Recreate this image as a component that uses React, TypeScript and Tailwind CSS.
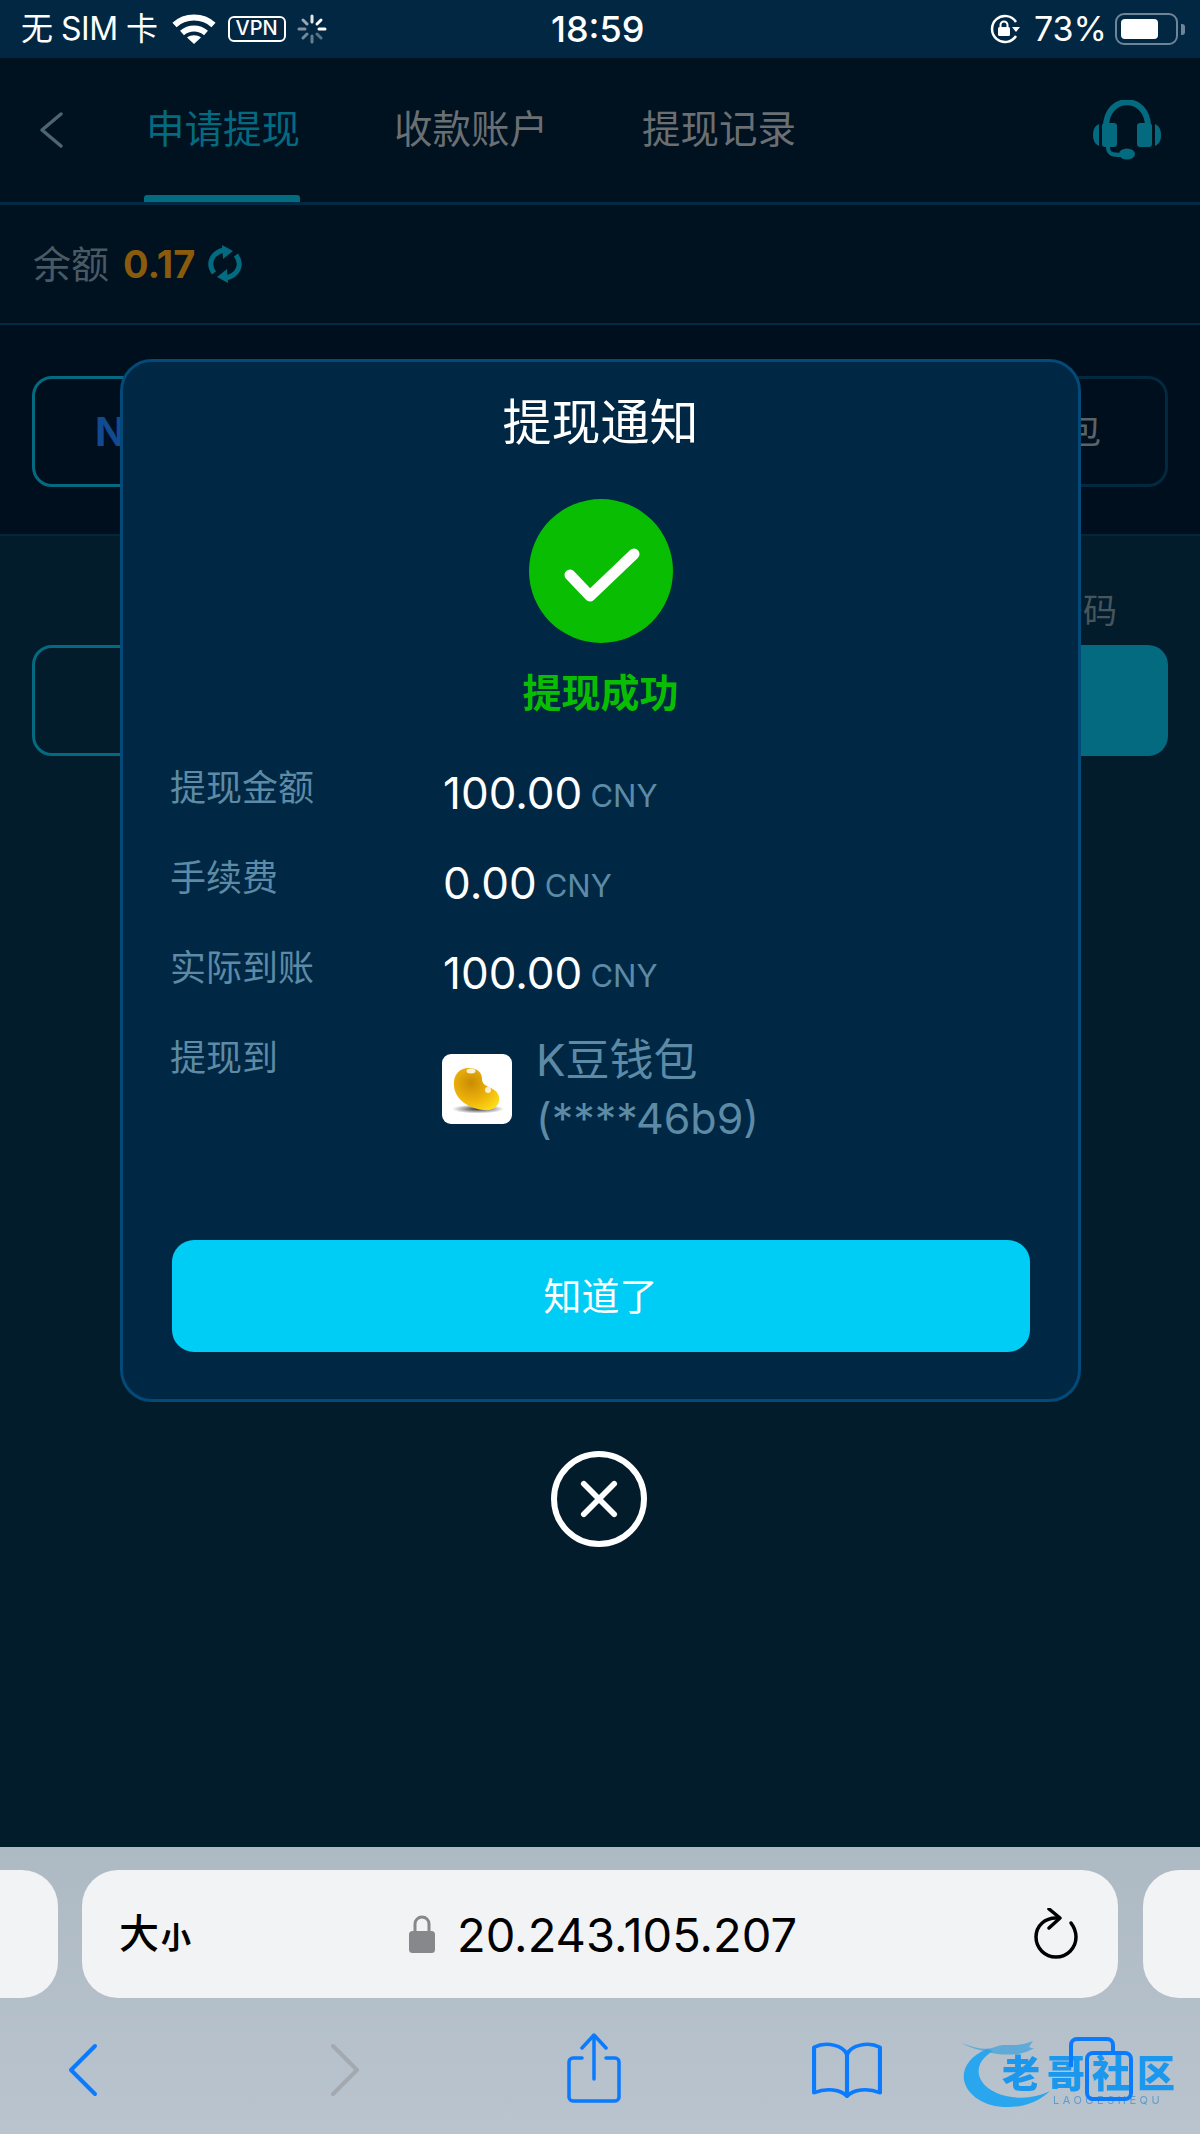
const rows = [
  { label: '提现金额', amount: '100.00' },
  { label: '手续费', amount: '0.00' },
  { label: '实际到账', amount: '100.00' },
]

function StatusBar() {
  return (
    <div className="relative h-[58px] shrink-0 bg-[#012743] flex items-center text-white pl-[21px] pr-[15px]">
      <span className="text-[32px] leading-none tracking-[-0.5px]">无 SIM 卡</span>
      <svg viewBox="0 0 44 32" className="ml-[14px] w-[44px] h-[32px]" fill="none" stroke="#fff" strokeWidth="6">
        <path d="M2.5 12C13 2 31 2 41.500 12" />
        <path d="M10 20c7-6 17-6 24 0" />
        <path d="M22 31l-7-6.500c4-3 10-3 14 0z" fill="#fff" stroke="none" />
      </svg>
      <span className="ml-[12px] w-[58px] h-[26px] border-2 border-white rounded-[6px] text-[20px] leading-[21px] text-center font-medium">VPN</span>
      <svg viewBox="0 0 30 30" className="ml-[11px] w-[30px] h-[30px]" stroke="#fff" strokeWidth="3" strokeLinecap="round">
        <path d="M15 2v6" opacity="0.9" />
        <path d="M24 6l-4 4" />
        <path d="M28 15h-6" />
        <path d="M24 24l-4-4" opacity="0.35" />
        <path d="M15 28v-6" opacity="0.4" />
        <path d="M6 24l4-4" opacity="0.45" />
        <path d="M2 15h6" opacity="0.5" />
        <path d="M6 6l4 4" opacity="0.6" />
      </svg>
      <span className="absolute left-[551px] text-[36px] leading-none font-medium">18:59</span>
      <svg viewBox="0 0 32 30" className="ml-auto w-[32px] h-[30px]" fill="none" stroke="#fff" strokeWidth="2.500">
        <path d="M27 22a13 13 0 1 1 0-14" />
        <path d="M23 13h8l-4 5z" fill="#fff" stroke="none" />
        <rect x="9" y="13" width="12" height="9" rx="1.500" fill="#fff" stroke="none" />
        <path d="M11.500 13v-2a3.500 3.500 0 0 1 7 0v2" strokeWidth="2" />
      </svg>
      <span className="ml-[13px] text-[34px] leading-none">73%</span>
      <div className="ml-[8px] w-[63px] h-[32px] rounded-[9px] border-2 border-[#6f8497] p-[4px]">
        <div className="w-[37px] h-full bg-white rounded-[4px]" />
      </div>
      <div className="ml-[3px] w-[4px] h-[11px] bg-[#6f8497] rounded-r-[3px]" />
    </div>
  )
}

function HeadsetIcon() {
  return (
    <svg viewBox="0 0 68 60" className="w-[68px] h-[60px]" fill="#046a80">
      <path d="M13 27C13 -6 55 -6 55 27" fill="none" stroke="#046a80" strokeWidth="6" />
      <rect x="9" y="23" width="15" height="24" rx="3" />
      <rect x="44" y="23" width="15" height="24" rx="3" />
      <path d="M0 35c0-6 2-9 6-11v22c-4-2-6-5-6-11z" />
      <path d="M68 35c0-6-2-9-6-11v22c4-2 6-5 6-11z" />
      <path d="M15 47c0 7 4 8 14 8" fill="none" stroke="#046a80" strokeWidth="4" />
      <ellipse cx="34" cy="54" rx="8" ry="5.500" />
    </svg>
  )
}

// two curved arrows chasing each other, taller than wide
function RefreshIcon() {
  return (
    <svg viewBox="0 0 36 38" className="w-[36px] h-[38px]" fill="none" stroke="#046a80" strokeWidth="5">
      <path d="M7 28C0 18 5 8 17 5" />
      <path d="M15 0l11 6-10 8z" fill="#046a80" stroke="none" />
      <path d="M29 10c7 10 2 20-10 23" />
      <path d="M21 38l-11-6 10-8z" fill="#046a80" stroke="none" />
    </svg>
  )
}

function BeanLogo() {
  return (
    <div className="mt-[23px] w-[70px] h-[70px] shrink-0 rounded-[9px] bg-white">
      <svg viewBox="0 0 70 70" className="w-full h-full">
        <defs>
          <radialGradient id="bean" cx="0.38" cy="0.35" r="0.8">
            <stop offset="0" stopColor="#c98c05" />
            <stop offset="0.55" stopColor="#eeb40a" />
            <stop offset="1" stopColor="#ffe01a" />
          </radialGradient>
          <radialGradient id="beanShadow">
            <stop offset="0" stopColor="#333" />
            <stop offset="1" stopColor="#fff" />
          </radialGradient>
        </defs>
        <ellipse cx="36" cy="55" rx="26" ry="4.500" fill="url(#beanShadow)" />
        <path d="M12 32C11 21 17 14 27 14c8 0 13 4 13 11 0 5 4 7 9 9 6 3 9 7 8 13-1 6-7 10-15 9C28 55 13 46 12 32z" fill="url(#bean)" />
        <ellipse cx="29" cy="17" rx="4.500" ry="2.500" fill="#fff" opacity="0.85" />
        <circle cx="46" cy="36" r="3" fill="#fff" opacity="0.8" />
      </svg>
    </div>
  )
}

function SuccessModal() {
  return (
    <div className="absolute left-[120px] top-[301px] w-[961px] flex flex-col items-center">
      <div className="w-full h-[1043px] rounded-[32px] border-[3px] border-[#034a78] bg-[#002744] flex flex-col items-center pt-[31px]">
        <h2 className="text-[49px] leading-[60px] text-white">提现通知</h2>
        <div className="mt-[46px] w-[144px] h-[144px] rounded-full bg-[#09bd03] flex items-center justify-center">
          <svg viewBox="0 0 78 56" className="mt-[8px] ml-[3px] w-[78px] h-[56px]" fill="none" stroke="#fff" strokeWidth="11" strokeLinecap="round" strokeLinejoin="round">
            <path d="M7 28l20 21L71 7" />
          </svg>
        </div>
        <div className="mt-[25px] text-[39px] leading-[50px] font-bold text-[#09bd03]">提现成功</div>

        <div className="mt-[43px] w-full px-[47px]">
          {rows.map((row) => (
            <div key={row.label} className="flex h-[90px]">
              <span className="w-[273px] text-[36px] leading-[54px] text-[#5d8aa5]">{row.label}</span>
              <span className="text-[44px] leading-[64px] text-white">
                {row.amount}
                <span className="ml-[8px] text-[31px] align-[2px] text-[#5d8aa5]">CNY</span>
              </span>
            </div>
          ))}
          <div className="flex">
            <span className="w-[272px] text-[36px] leading-[54px] text-[#5d8aa5]">提现到</span>
            <BeanLogo />
            <div className="ml-[24px] text-[44px] leading-[58px] text-[#5d8aa5]">
              <div>K豆钱包</div>
              <div className="text-[43px]">(****46b9)</div>
            </div>
          </div>
        </div>

        <button className="mt-[93px] w-[858px] h-[112px] rounded-[22px] bg-[#00cdf5] text-[38px] text-white">知道了</button>
      </div>

      <button className="mt-[49px] -ml-[3px] w-[96px] h-[96px] rounded-full border-[6px] border-white flex items-center justify-center">
        <svg viewBox="0 0 40 40" className="w-[38px] h-[38px]" stroke="#fff" strokeWidth="6" strokeLinecap="round">
          <path d="M4 4l32 32M36 4L4 36" />
        </svg>
      </button>
    </div>
  )
}

// community logo stamped over the bottom toolbar: dragon swoosh plus wordmark
function Watermark() {
  return (
    <div className="absolute left-[960px] top-[187px] w-[225px] h-[90px] blur-[0.7px] overflow-hidden">
      <svg viewBox="0 0 100 80" className="absolute left-0 top-0 w-[100px] h-[80px]" fill="none">
        <path d="M27 15C10 22 2 34 4 46c3 16 22 28 46 27 14 0 30-6 40-16-12 6-26 8-38 6-16-2-30-10-33-22-2-10 4-18 14-24z" fill="#2aa6ee" />
        <path d="M2 9c12 5 22 7 30 5 10-4 12-3 20-3 8 0 14-1 21-4-2 3-3 4-4 6 2 1 3 1 5 1-4 3-10 5-16 6-10 1-20 1-30-2C20 16 10 14 2 9z" fill="#3a9fdc" opacity="0.7" />
      </svg>
      <span className="absolute left-[42px] top-[24px] text-[38px] leading-[30px] font-extrabold text-[#1b97ee] whitespace-nowrap tracking-[7px]">老哥社区</span>
      <span className="absolute left-[93px] top-[60px] text-[11px] leading-[12px] text-[#5f9ccb] whitespace-nowrap tracking-[3.500px]">LAOGESHEQU</span>
    </div>
  )
}

function BrowserChrome() {
  return (
    <div className="relative h-[287px] shrink-0 bg-gradient-to-b from-[#adb9c3] to-[#b9c4ce]">
      <div className="flex pt-[23px] h-[151px]">
        <div className="w-[58px] h-[128px] rounded-r-[36px] bg-[#f2f3f5]" />
        <div className="relative ml-[24px] w-[1036px] h-[128px] rounded-[36px] bg-[#f2f3f5] flex items-center justify-between pl-[37px] pr-[40px]">
          <span className="text-[40px] leading-none font-medium text-black">
            大<span className="ml-[2px] text-[30px] font-semibold">小</span>
          </span>
          <div className="absolute left-[327px] flex items-center gap-[22px]">
            <svg viewBox="0 0 26 38" className="w-[26px] h-[38px]" fill="none">
              <path d="M6 18V9a7 7 0 0 1 14 0v9" stroke="#87888c" strokeWidth="3" />
              <rect x="0" y="16" width="26" height="22" rx="3.500" fill="#87888c" />
            </svg>
            <span className="text-[47px] leading-none text-black">20.243.105.207</span>
          </div>
          <svg viewBox="0 0 44 52" className="w-[44px] h-[52px]" fill="none" stroke="#000" strokeWidth="3.500" strokeLinecap="round" strokeLinejoin="round">
            <path d="M24 10C11 9 2 18 2 29a20 20 0 0 0 40 0c0-6-2-10-5-14" />
            <path d="M15 1l11 9-11 10" />
          </svg>
        </div>
        <div className="ml-[25px] flex-1 h-[128px] rounded-l-[36px] bg-[#f2f3f5]" />
      </div>

      <Watermark />

      <div className="relative h-[136px] text-[#0a7afe]">
        <svg viewBox="0 0 30 54" className="absolute left-[68px] top-[45px] w-[30px] h-[54px]" fill="none" stroke="currentColor" strokeWidth="4" strokeLinecap="round" strokeLinejoin="round">
          <path d="M27 3L3 27l24 24" />
        </svg>
        <svg viewBox="0 0 30 54" className="absolute left-[330px] top-[45px] w-[30px] h-[54px]" fill="none" stroke="#a3a9af" strokeWidth="4" strokeLinecap="round" strokeLinejoin="round">
          <path d="M3 3l24 24L3 51" />
        </svg>
        <svg viewBox="0 0 54 70" className="absolute left-[567px] top-[35px] w-[54px] h-[70px]" fill="none" stroke="currentColor" strokeWidth="3.500" strokeLinecap="round" strokeLinejoin="round">
          <path d="M15 25H6a4 4 0 0 0-4 4v35a4 4 0 0 0 4 4h42a4 4 0 0 0 4-4V29a4 4 0 0 0-4-4h-9" />
          <path d="M27 46V3" />
          <path d="M15 15L27 2l12 13" />
        </svg>
        <svg viewBox="0 0 68 64" preserveAspectRatio="none" className="absolute left-[812px] top-[44px] w-[70px] h-[56px]" fill="none" stroke="currentColor" strokeWidth="4" strokeLinejoin="round">
          <path d="M34 14C30 4 14 -1 2 6v52c12-6 26-4 32 4 6-8 20-10 32-4V6C54 -1 38 4 34 14z" />
          <path d="M34 14v48" />
        </svg>
        <svg viewBox="0 0 64 64" className="absolute left-[1069px] top-[39px] w-[64px] h-[64px]" fill="none" stroke="currentColor" strokeWidth="4" strokeLinejoin="round">
          <path d="M2 30V8a6 6 0 0 1 6-6h30a6 6 0 0 1 6 6v8" />
          <rect x="18" y="16" width="44" height="46" rx="6" />
        </svg>
      </div>
    </div>
  )
}

export default function App() {
  return (
    <div className="w-[1200px] h-[2134px] flex flex-col overflow-hidden bg-[#031c2c] font-['Inter','Noto_Sans_CJK_SC',sans-serif]">
      <StatusBar />

      <main className="relative flex-1 flex flex-col">
        {/* Nav tabs */}
        <nav className="h-[147px] shrink-0 bg-[#00111f] border-b-[3px] border-[#012a44] relative flex items-center">
          <svg viewBox="0 0 26 38" className="absolute left-[38px] top-[53px] w-[26px] h-[38px]" fill="none" stroke="#4d6472" strokeWidth="3.500" strokeLinecap="round" strokeLinejoin="round">
            <path d="M23 3L4 19l19 16" />
          </svg>
          <div className="ml-[146px] flex gap-[94px] -mt-[3px] text-[38.5px] leading-[50px] text-[#6a6f73]">
            <span className="text-[#046a80]">申请提现</span>
            <span>收款账户</span>
            <span>提现记录</span>
          </div>
          <div className="absolute left-[144px] bottom-0 w-[156px] h-[7px] rounded-t-[3px] bg-[#046a80]" />
          <div className="absolute right-[39px] top-[42px]">
            <HeadsetIcon />
          </div>
        </nav>

        {/* Balance */}
        <div className="h-[120px] shrink-0 bg-[#00111f] border-b-[2px] border-[#012a44] flex items-center pl-[33px] gap-[14px]">
          <span className="text-[38px] leading-none text-[#4a5a64]">余额</span>
          <span className="text-[38px] leading-none font-bold text-[#8a5a0d]">0.17</span>
          <div className="-ml-[2px]">
            <RefreshIcon />
          </div>
        </div>

        {/* Withdrawal methods */}
        <div className="h-[211px] shrink-0 bg-[#000f1d] border-b-[2px] border-[#032638] flex justify-between px-[32px] pt-[51px]">
          <div className="w-[400px] h-[111px] rounded-[20px] border-[3px] border-[#056a80] pl-[60px] text-[40px] leading-[105px] font-bold text-[#114a90]">NOWPAY</div>
          <div className="w-[400px] h-[111px] rounded-[20px] border-[3px] border-[#03283f] pr-[64px] text-right text-[36px] leading-[105px] text-[#5a6368]">K豆钱包</div>
        </div>

        {/* Password entry */}
        <div className="flex justify-between pl-[32px] pr-[83px] pt-[50px]">
          <span />
          <span className="text-[34px] leading-[50px] text-[#47555d]">提现密码</span>
        </div>
        <div className="flex justify-between px-[32px] mt-[9px]">
          <div className="w-[700px] h-[111px] rounded-[20px] border-[3px] border-[#056a80]" />
          <div className="w-[300px] h-[111px] rounded-[20px] bg-[#046a80]" />
        </div>

        <SuccessModal />
      </main>

      <BrowserChrome />
    </div>
  )
}
